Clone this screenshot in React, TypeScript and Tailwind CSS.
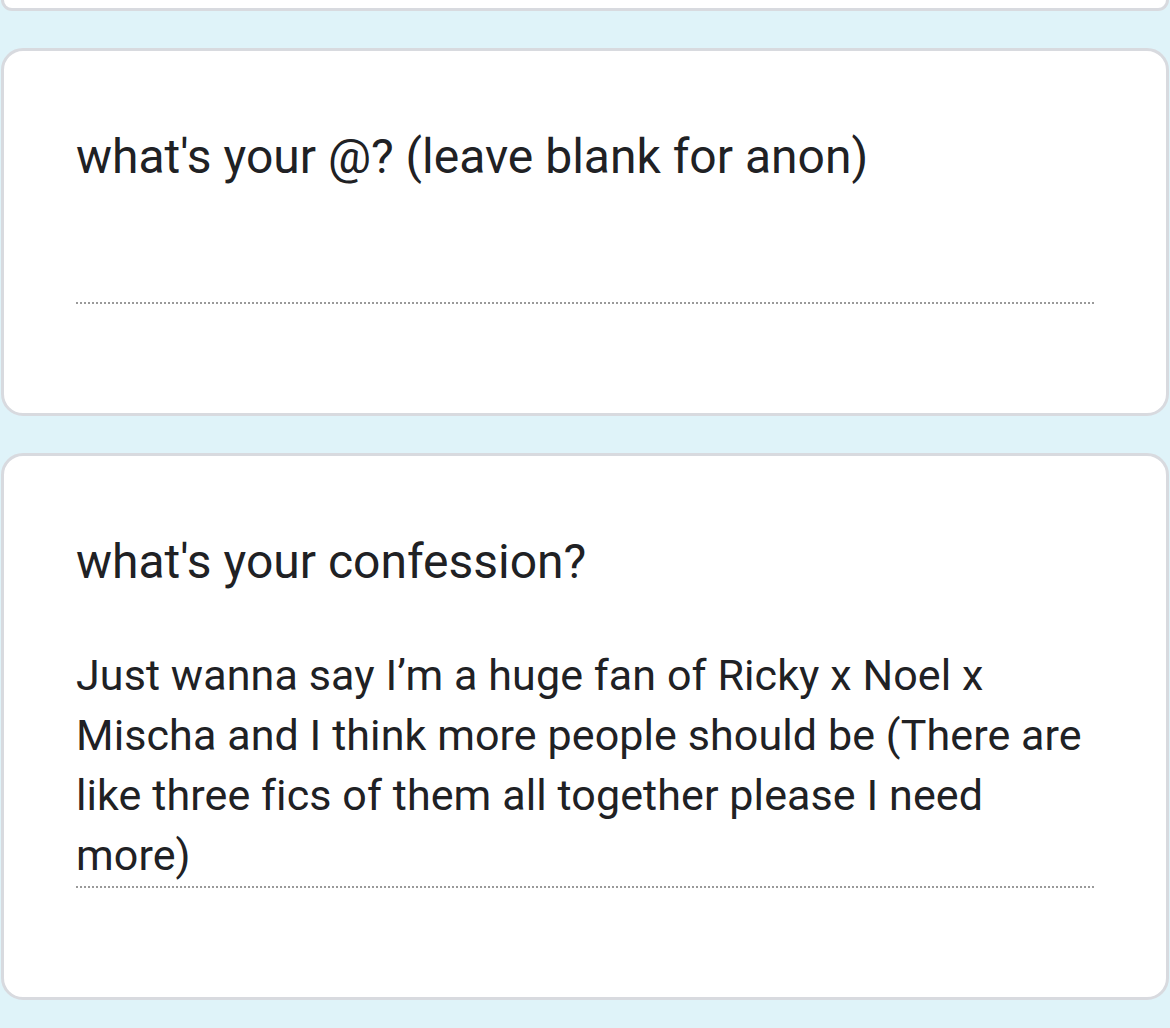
export default function App() {
  return (
    <div
      className="min-h-[1028px] w-[1170px] bg-[#dff3f9] flex flex-col gap-[37px] text-[#202124]"
      style={{ fontFamily: 'Roboto, "Noto Sans", sans-serif' }}
    >
      {/* previous card, cut off above */}
      <div className="h-[11px] mx-[1px] bg-white border-x-[3px] border-b-[3px] border-[#d8dadf] rounded-b-[22px]" />

      <div className="mx-[1px] bg-white border-[3px] border-[#d8dadf] rounded-[22px] px-[72px] pt-[80px] h-[368px]">
        <h2 className="text-[48px] leading-[52px]">what's your @? (leave blank for anon)</h2>
        <div className="mt-[119px] border-b-[2px] border-dotted border-[#9a9a9a]" />
      </div>

      <div className="mx-[1px] bg-white border-[3px] border-[#d8dadf] rounded-[22px] px-[72px] pt-[80px] h-[547px]">
        <h2 className="text-[48px] leading-[52px]">what's your confession?</h2>
        <p className="mt-[57px] text-[43px] leading-[60px] tracking-[0.1px] pr-[8px]">
          Just wanna say I’m a huge fan of Ricky x Noel x Mischa and I think more people should be (There are like three fics of them all together please I need more)
        </p>
        <div className="mt-[1px] border-b-[2px] border-dotted border-[#9a9a9a]" />
      </div>
    </div>
  )
}
